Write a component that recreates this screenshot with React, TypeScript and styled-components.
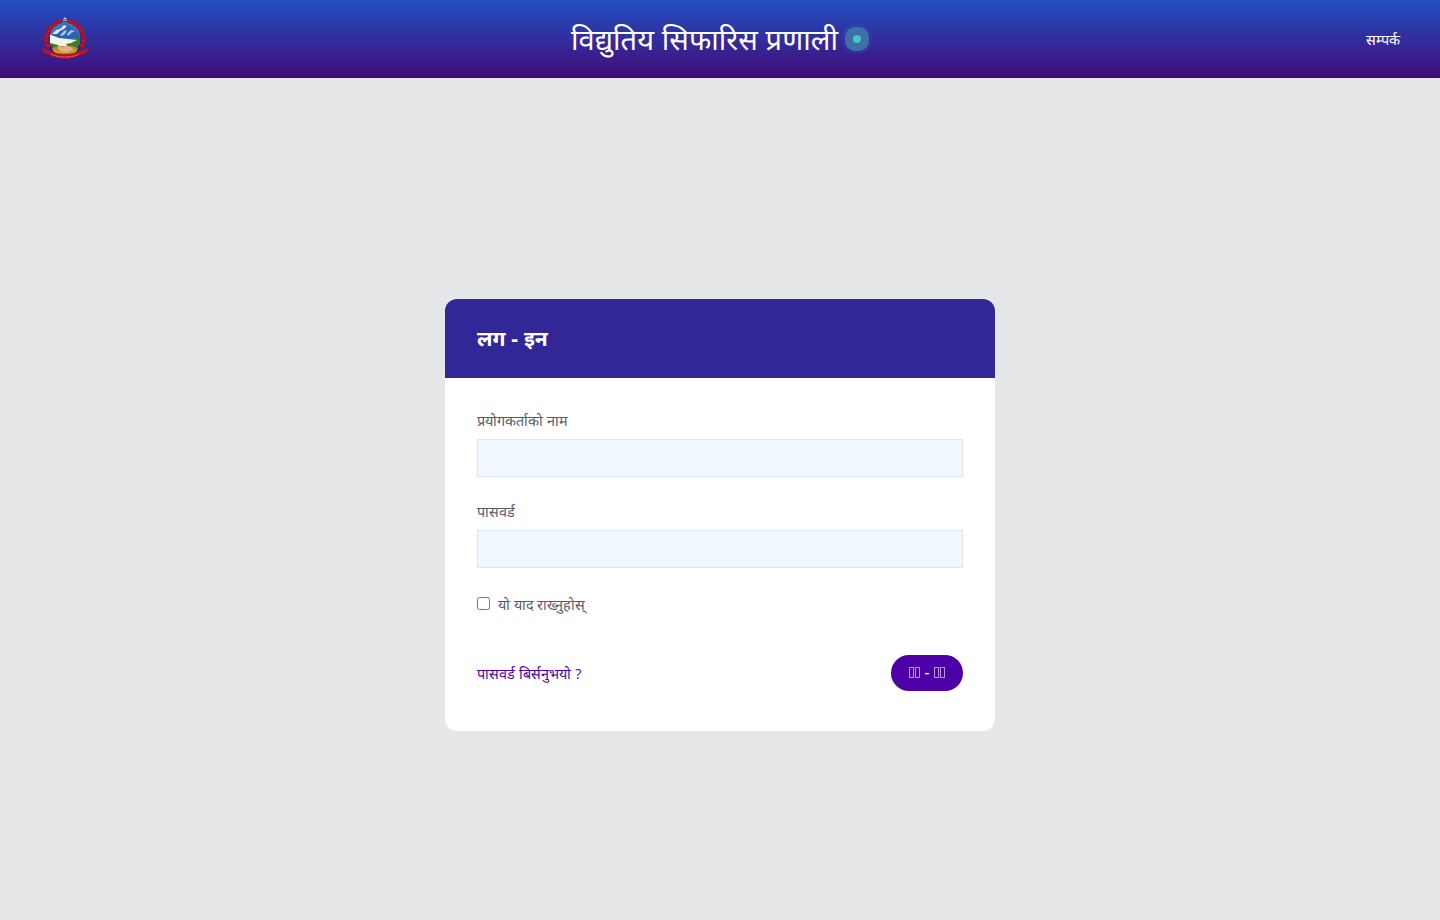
import React from "react";
import styled, { createGlobalStyle } from "styled-components";

const GlobalStyle = createGlobalStyle`
  *, *::before, *::after { box-sizing: border-box; }
  body {
    margin: 0;
    background: #e4e6e8;
    color: #545d66;
    font-family: "Open Sans", sans-serif;
    font-size: 14.4px;
    line-height: 21px;
    word-spacing: 0.4px;
  }
`;

const Page = styled.div`
  min-height: 920px;
  display: flex;
  flex-direction: column;
`;

const Header = styled.header`
  height: 78px;
  padding: 0 40px;
  display: grid;
  grid-template-columns: 1fr auto 1fr;
  align-items: center;
  color: #fff;
  background: linear-gradient(#2150c1, #430a78);
`;

const EmblemIcon = styled.svg`
  display: block;
  width: 50px;
  height: 44px;
  overflow: visible;
`;

const Title = styled.h1`
  margin: 0;
  display: flex;
  align-items: center;
  gap: 7px;
  font-family: "Noto Sans", sans-serif;
  font-size: 29px;
  font-weight: 400;
  line-height: 42px;
  letter-spacing: 0.08px;
  word-spacing: 0;
`;

const StatusPulse = styled.span`
  width: 24px;
  height: 24px;
  margin-top: -1px;
  border-radius: 10px;
  display: grid;
  place-items: center;
  background: #3d70a8;
  box-shadow: 0 0 0 3px rgba(61, 112, 168, 0.14);
  &::after {
    content: "";
    width: 8px;
    height: 8px;
    border-radius: 50%;
    background: #48c6b8;
  }
`;

const ContactLink = styled.a`
  justify-self: end;
  color: #fff;
  text-decoration: none;
`;

const Main = styled.main`
  flex: 1;
  padding-top: 32px;
  display: flex;
  align-items: center;
  justify-content: center;
`;

const Card = styled.form`
  width: 550px;
  height: 432px;
  border-radius: 12px;
  overflow: hidden;
  background: #fff;
`;

const CardHeader = styled.div`
  height: 79px;
  padding: 0 32px 2px;
  display: flex;
  align-items: center;
  background: #322796;
`;

const CardTitle = styled.h2`
  margin: 0;
  color: #fff;
  font-family: "Noto Sans", sans-serif;
  font-size: 21px;
  font-weight: 700;
  line-height: 30px;
`;

const CardBody = styled.div`
  padding: 32px 32px 40px;
`;

const Field = styled.div`
  margin-bottom: 24px;
`;

const Label = styled.label`
  display: block;
  margin-bottom: 8px;
`;

const Input = styled.input`
  display: block;
  width: 100%;
  height: 38px;
  padding: 6px 12px;
  border: 1px solid #e3e5e8;
  border-radius: 0;
  background: #eff7ff;
  font: inherit;
`;

const Remember = styled.label`
  display: flex;
  align-items: center;
  gap: 8px;
  height: 21px;
  margin-top: 26px;
  word-spacing: -0.2px;
`;

const Checkbox = styled.input`
  width: 13px;
  height: 13px;
  margin: 0 0 2px;
`;

const Actions = styled.div`
  display: flex;
  align-items: center;
  justify-content: space-between;
  margin-top: 40px;
`;

const ForgotLink = styled.a`
  color: #4d00a5;
  text-decoration: none;
`;

const SubmitButton = styled.button`
  width: 72px;
  height: 36px;
  padding: 0 0 2px;
  border: 0;
  border-radius: 18px;
  display: flex;
  align-items: center;
  justify-content: center;
  gap: 5px;
  background: #4d00a5;
  color: #fff;
  font: 500 15px/24px "Noto Sans", sans-serif;
`;

const GlyphPair = styled.span`
  display: flex;
  gap: 1px;
  padding-top: 1px;
  &::before,
  &::after {
    content: "";
    width: 5px;
    height: 11px;
    border: 1px solid #b794db;
  }
`;

const flowers = [
  [19.5, 3.5], [15, 6], [11, 9.2], [8.7, 13], [6.6, 17.5], [6.2, 22.5], [8, 27.5],
  [30.5, 3.5], [35, 6], [39, 9.2], [41.3, 13], [43.4, 17.5], [43.8, 22.5], [42, 27.5],
];

function Emblem() {
  return (
    <EmblemIcon viewBox="0 0 50 44" role="img" aria-label="नेपाल">
      <path d="M10 24C9 11 15 4.500 25 4.500S41 11 40 24l-7 9H17Z" fill="#3975bd" />
      <path d="M10 19 16 12l3 1 4-5 4-1 4 4 5 3 4 6v5H10Z" fill="#2863b3" />
      <path d="m12 17 4-4 4-1 4-4 3 1-3 3-4 2-3 3Z" fill="#dceaf5" />
      <path d="m20 18 4-4 3-1-2 4-3 2Zm7-1 4-4 4 1-4 2-3 3Z" fill="#a9c9e6" />
      <path d="M10 22c7-2 12 2 17 1s8-3 13-2v6l-5 6H15l-5-6Z" fill="#3b7a39" />
      <path d="M10 17.500 19 21l9 1 9 1-6 3-5 1 3 4-6 1-5-4-8-2Z" fill="#f2f4e8" />
      <path d="m12 31 6-2h14l6 2-3 6H15Z" fill="#b68b26" />
      <path d="m18 29 4 1 4-1 5 1 3 3-6 2h-6l-4-3Z" fill="#e4ad8c" />
      <path d="m13 33 7 3h10l7-3" fill="none" stroke="#d1ad35" strokeWidth="1.3" />
      {flowers.map(([x, y]) => (
        <g key={`${x}-${y}`}>
          <circle cx={x} cy={y + 1} r="2.5" fill="#b00d24" />
          <path d={`M${x - 1.5} ${y + 1}h3m-1.500-1.500v3`} stroke="#d01c35" strokeWidth=".6" />
        </g>
      ))}
      <path d="m23.500 2 1.500-2 1.500 2v2h-3Z" fill="#d6dbeb" />
      <path d="M24.200 2h1.600v1.500h-1.600Z" fill="#c51935" />
      <path d="m1 31 8 2c6 5 26 5 32 0l8-2-3 5-6 2c-7 5-23 5-30 0l-6-2Z" fill="#b91320" />
      <path d="M11 37c7 4 21 4 28 0" fill="none" stroke="#df9191" strokeWidth=".9" strokeDasharray="2 1" />
    </EmblemIcon>
  );
}

export default function App() {
  return (
    <>
      <GlobalStyle />
      <Page>
        <Header>
          <Emblem />
          <Title>
            विद्युतिय सिफारिस प्रणाली
            <StatusPulse />
          </Title>
          <ContactLink href="#">सम्पर्क</ContactLink>
        </Header>
        <Main>
          <Card>
            <CardHeader>
              <CardTitle>लग - इन</CardTitle>
            </CardHeader>
            <CardBody>
              <Field>
                <Label htmlFor="username">प्रयोगकर्ताको नाम</Label>
                <Input id="username" />
              </Field>
              <Field>
                <Label htmlFor="password">पासवर्ड</Label>
                <Input id="password" type="password" />
              </Field>
              <Remember>
                <Checkbox type="checkbox" />
                यो याद राख्नुहोस्
              </Remember>
              <Actions>
                <ForgotLink href="#">पासवर्ड बिर्सनुभयो ?</ForgotLink>
                <SubmitButton type="button" aria-label="लग - इन">
                  <GlyphPair />
                  -
                  <GlyphPair />
                </SubmitButton>
              </Actions>
            </CardBody>
          </Card>
        </Main>
      </Page>
    </>
  );
}
